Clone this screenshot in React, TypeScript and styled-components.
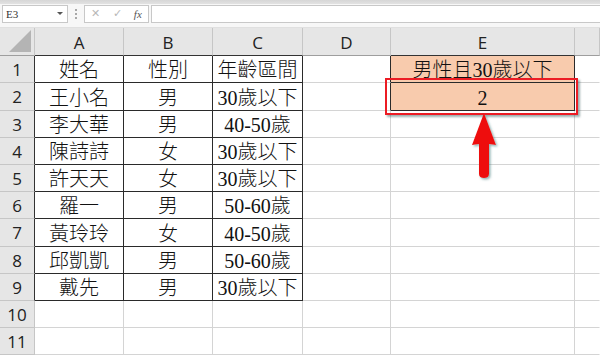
import { createGlobalStyle, styled } from "styled-components";

const Global = createGlobalStyle`
    html, body {
        margin: 0;
        padding: 0;
        background: #ffffff;
    }
    body {
        width: 600px;
        height: 356px;
        overflow: hidden;
        font-family: "Liberation Sans", Arial, sans-serif;
    }
`;

const Page = styled.div`
    display: flex;
    flex-direction: column;
    width: 600px;
    height: 356px;
    overflow: hidden;
`;

const FormulaBar = styled.div`
    display: flex;
    align-items: center;
    height: 23px;
    padding-top: 4px;
    background: linear-gradient(#d6d6d6 0, #e2e2e2 4px, #f7f7f7 4px);
    box-sizing: content-box;
    padding-left: 2px;
    border-bottom: 1px solid #e0e0e0;
`;

const NameBox = styled.div`
    display: flex;
    align-items: center;
    justify-content: space-between;
    width: 57px;
    height: 16px;
    margin-top: -4px;
    padding: 0 4px 0 3px;
    box-sizing: content-box;
    background: #fff;
    border: 1px solid #c8c8c8;
    font-family: "Liberation Serif", serif;
    font-size: 11px;
    color: #333;
`;

const Caret = styled.span`
    width: 0;
    height: 0;
    border-left: 3px solid transparent;
    border-right: 3px solid transparent;
    border-top: 3px solid #555;
`;

const Grip = styled.div`
    display: flex;
    flex-direction: column;
    gap: 2px;
    margin: -4px 7px 0 7px;
    span {
        width: 2px;
        height: 2px;
        background: #a8a8a8;
    }
`;

const FxBox = styled.div`
    display: flex;
    align-items: center;
    justify-content: space-around;
    width: 63px;
    height: 16px;
    margin-top: -4px;
    background: #fff;
    border: 1px solid #c8c8c8;
    font-size: 11px;
    color: #b8b8b8;
`;

const Fx = styled.span`
    font-family: "Liberation Serif", serif;
    font-style: italic;
    font-size: 11px;
    color: #555;
`;

const FormulaInput = styled.div`
    flex: 1;
    height: 16px;
    margin: -4px 0 0 2px;
    background: #fff;
    border: 1px solid #c8c8c8;
    border-right: none;
`;

const Sheet = styled.div`
    display: grid;
    grid-template-columns: 35px 89px 89px 90px 88px 184px 1fr;
    grid-template-rows: 28px 27px 28px 27px 27px 27px 27px 28px 27px 27px 27px 27px;
`;

const Corner = styled.div`
    position: relative;
    background: #e6e6e6;
    border-right: 1px solid #c6c6c6;
    border-bottom: 1px solid #9e9e9e;
    box-sizing: border-box;
    &::after {
        content: "";
        position: absolute;
        right: 3px;
        bottom: 3px;
        border-left: 22px solid transparent;
        border-bottom: 22px solid #b4b4b4;
    }
`;

const ColHead = styled.div<{ $dark?: boolean }>`
    display: flex;
    align-items: center;
    justify-content: center;
    background: #e6e6e6;
    border-right: 1px solid #c6c6c6;
    border-bottom: 1px solid ${(p) => (p.$dark ? "#333" : "#9e9e9e")};
    box-sizing: border-box;
    font-family: "Open Sans", "Liberation Sans", sans-serif;
    font-size: 17px;
    color: #222;
    padding-top: 2px;
`;

const RowHead = styled.div<{ $dark?: boolean }>`
    display: flex;
    align-items: center;
    justify-content: center;
    background: #e6e6e6;
    border-right: 1px solid ${(p) => (p.$dark ? "#333" : "#c6c6c6")};
    border-bottom: 1px solid #c6c6c6;
    box-sizing: border-box;
    font-family: "Open Sans", "Liberation Sans", sans-serif;
    font-size: 17px;
    color: #222;
`;

const Cell = styled.div<{ $right?: string; $bottom?: string; $fill?: string }>`
    position: relative;
    display: flex;
    align-items: flex-end;
    justify-content: center;
    background: ${(p) => p.$fill ?? "#fff"};
    border-right: 1px solid ${(p) => p.$right ?? "#d4d4d4"};
    border-bottom: 1px solid ${(p) => p.$bottom ?? "#d4d4d4"};
    box-sizing: border-box;
    font-family: "Liberation Serif", "Noto Sans CJK TC", serif;
    font-size: 20px;
    font-weight: 300;
    line-height: 24px;
    color: #111;
    white-space: nowrap;
`;

const Highlight = styled.div`
    position: absolute;
    left: -6px;
    right: -4px;
    top: -5px;
    bottom: -5px;
    z-index: 3;
    border: 2px solid #ec1c24;
    box-shadow: 2px 2px 2px rgba(40, 80, 80, 0.45);
    pointer-events: none;
`;

const Arrow = styled.svg`
    position: absolute;
    left: 80px;
    top: 30px;
    overflow: visible;
    z-index: 3;
`;

const rows = [
    ["姓名", "性別", "年齡區間"],
    ["王小名", "男", "30歲以下"],
    ["李大華", "男", "40-50歲"],
    ["陳詩詩", "女", "30歲以下"],
    ["許天天", "女", "30歲以下"],
    ["羅一", "男", "50-60歲"],
    ["黃玲玲", "女", "40-50歲"],
    ["邱凱凱", "男", "50-60歲"],
    ["戴先", "男", "30歲以下"],
    ["", "", ""],
    ["", "", ""],
];

const DARK = "#2a2a2a";
const ORANGE = "#f8cbad";

export default function App() {
    return (
        <Page>
            <Global />
            <FormulaBar>
                <NameBox>
                    E3
                    <Caret />
                </NameBox>
                <Grip>
                    <span />
                    <span />
                    <span />
                </Grip>
                <FxBox>
                    <span>✕</span>
                    <span>✓</span>
                    <Fx>fx</Fx>
                </FxBox>
                <FormulaInput />
            </FormulaBar>
            <Sheet>
                <Corner />
                <ColHead $dark>A</ColHead>
                <ColHead $dark>B</ColHead>
                <ColHead $dark>C</ColHead>
                <ColHead>D</ColHead>
                <ColHead $dark>E</ColHead>
                <ColHead />
                {rows.map((r, i) => {
                    const inTable = i < 9;
                    const n = i + 1;
                    return [
                        <RowHead key={`h${n}`} $dark={inTable}>
                            {n}
                        </RowHead>,
                        ...r.map((v, j) => (
                            <Cell
                                key={`c${n}-${j}`}
                                $right={inTable ? DARK : undefined}
                                $bottom={inTable ? DARK : undefined}
                            >
                                {v}
                            </Cell>
                        )),
                        <Cell key={`d${n}`} $right={n <= 2 ? DARK : undefined} />,
                        n === 1 ? (
                            <Cell key={`e${n}`} $fill={ORANGE} $right={DARK} $bottom={DARK}>
                                男性且30歲以下
                            </Cell>
                        ) : n === 2 ? (
                            <Cell key={`e${n}`} $fill={ORANGE} $right={DARK} $bottom={DARK}>
                                2
                                <Highlight />
                                <Arrow width="26" height="66" viewBox="0 0 26 66">
                                    <defs>
                                        <filter id="sh" x="-50%" y="-20%" width="200%" height="150%">
                                            <feDropShadow dx="1.5" dy="1.5" stdDeviation="1" floodColor="#2f6f6f" floodOpacity="0.55" />
                                        </filter>
                                    </defs>
                                    <path
                                        d="M13 0 L25 32 L18 31 L18 61 Q18 65 13 65 Q8 65 8 61 L8 31 L1 32 Z"
                                        fill="#ee1010"
                                        filter="url(#sh)"
                                    />
                                </Arrow>
                            </Cell>
                        ) : (
                            <Cell key={`e${n}`} />
                        ),
                        <Cell key={`f${n}`} $right="transparent" />,
                    ];
                })}
            </Sheet>
        </Page>
    );
}
